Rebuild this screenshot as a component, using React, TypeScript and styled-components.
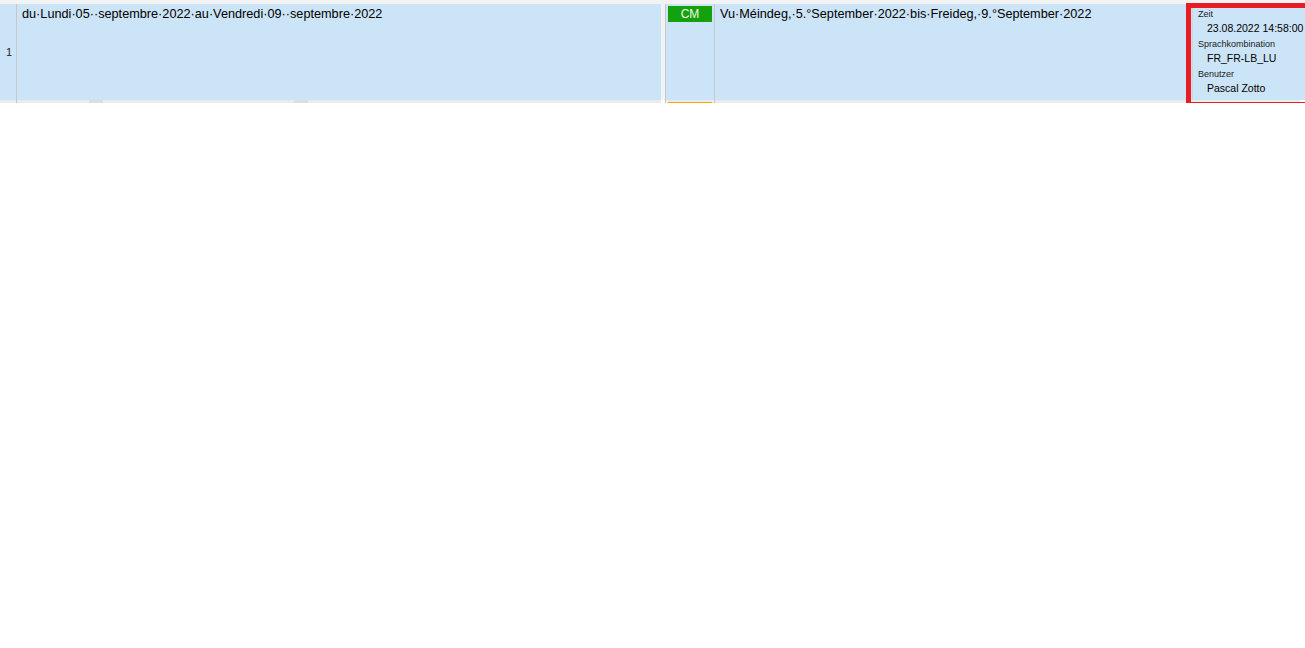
import { createGlobalStyle, styled } from 'styled-components';

const GlobalStyle = createGlobalStyle`
  html, body {
    margin: 0;
    padding: 0;
    background: #ffffff;
  }
  body {
    font-family: 'Liberation Sans', Arial, sans-serif;
    color: #000;
  }
`;

const BLUE = '#cce4f7';
const GRID_LINE = '#c8c8c8';

const meta = [
  { label: 'Zeit', value: '23.08.2022 14:58:00' },
  { label: 'Sprachkombination', value: 'FR_FR-LB_LU' },
  { label: 'Benutzer', value: 'Pascal Zotto' },
];

export default function App() {
  return (
    <>
      <GlobalStyle />
      <Grid>
        <Row>
          <NumCell>1</NumCell>
          <SourceCell>du·Lundi·05··septembre·2022·au·Vendredi·09··septembre·2022</SourceCell>
          <Gap />
          <StatusCell>
            <Badge>CM</Badge>
          </StatusCell>
          <TargetCell>Vu·Méindeg,·5.°September·2022·bis·Freideg,·9.°September·2022</TargetCell>
          <MetaCell>
            <MetaInner>
              {meta.map((m) => (
                <MetaGroup key={m.label}>
                  <MetaLabel>{m.label}</MetaLabel>
                  <MetaValue>{m.value}</MetaValue>
                </MetaGroup>
              ))}
            </MetaInner>
          </MetaCell>
        </Row>
        <Footer>
          <FootNum />
          <FootSource>
            <Thumb $left={72} />
            <Thumb $left={277} />
          </FootSource>
          <FootGap />
          <FootStatus>
            <OrangeBar />
          </FootStatus>
          <FootRest />
        </Footer>
        <Highlight />
      </Grid>
    </>
  );
}

const Grid = styled.div`
  position: relative;
  width: 1305px;
  padding-top: 4px;
  background: #f3f3f3;
  display: flex;
  flex-direction: column;
`;

const Row = styled.div`
  display: flex;
  height: 96px;
  background: ${BLUE};
`;

const NumCell = styled.div`
  width: 17px;
  box-sizing: border-box;
  border-right: 1px solid ${GRID_LINE};
  display: flex;
  align-items: center;
  justify-content: center;
  padding-left: 2px;
  font-size: 11px;
  color: #222;
`;

const SourceCell = styled.div`
  width: 644px;
  padding: 2px 5px 0;
  box-sizing: border-box;
  font-size: 12.7px;
  line-height: 16px;
  white-space: nowrap;
`;

const Gap = styled.div`
  width: 4px;
  background: #f3f3f3;
`;

const StatusCell = styled.div`
  width: 50px;
  box-sizing: border-box;
  border-left: 1px solid ${GRID_LINE};
  border-right: 1px solid ${GRID_LINE};
  padding: 2px 2px 0;
`;

const Badge = styled.div`
  width: 44px;
  height: 16px;
  background: #14a10e;
  color: #f4f8e8;
  font-size: 12px;
  line-height: 16px;
  text-align: center;
`;

const TargetCell = styled.div`
  width: 472px;
  padding: 2px 5px 0;
  box-sizing: border-box;
  font-size: 12.7px;
  line-height: 16px;
  white-space: nowrap;
`;

const MetaCell = styled.div`
  flex: 1;
  padding-left: 5px;
  padding-top: 3px;
`;

const MetaInner = styled.div`
  height: 100%;
  border-left: 1px solid #d4d4d4;
  padding-left: 5px;
  display: flex;
  flex-direction: column;
`;

const MetaGroup = styled.div`
  display: flex;
  flex-direction: column;
`;

const MetaLabel = styled.div`
  font-size: 9px;
  line-height: 14px;
  color: #1a1a1a;
  white-space: nowrap;
`;

const MetaValue = styled.div`
  font-size: 10.5px;
  line-height: 15px;
  margin-bottom: 1px;
  padding-left: 9px;
  white-space: nowrap;
`;

const Footer = styled.div`
  display: flex;
  height: 3px;
  background: #ffffff;
`;

const FootNum = styled.div`
  width: 17px;
  box-sizing: border-box;
  border-right: 1px solid ${GRID_LINE};
  background: #ebebeb;
`;

const FootSource = styled.div`
  position: relative;
  width: 644px;
  background: #ebebeb;
`;

const Thumb = styled.div<{ $left: number }>`
  position: absolute;
  top: 0;
  left: ${(p) => p.$left}px;
  width: 14px;
  height: 100%;
  background: #dedede;
`;

const FootGap = styled.div`
  width: 4px;
  background: #ffffff;
`;

const FootStatus = styled.div`
  width: 50px;
  box-sizing: border-box;
  border-left: 1px solid ${GRID_LINE};
  border-right: 1px solid ${GRID_LINE};
  background: #ebebeb;
  padding: 2px 2px 0;
`;

const OrangeBar = styled.div`
  width: 44px;
  height: 1px;
  background: #f7a500;
`;

const FootRest = styled.div`
  width: 585px;
  background: #ebebeb;
`;

const Highlight = styled.div`
  position: absolute;
  left: 1186px;
  top: 3px;
  width: 130px;
  height: 104px;
  box-sizing: border-box;
  border: 5px solid #e81c24;
  pointer-events: none;
`;
